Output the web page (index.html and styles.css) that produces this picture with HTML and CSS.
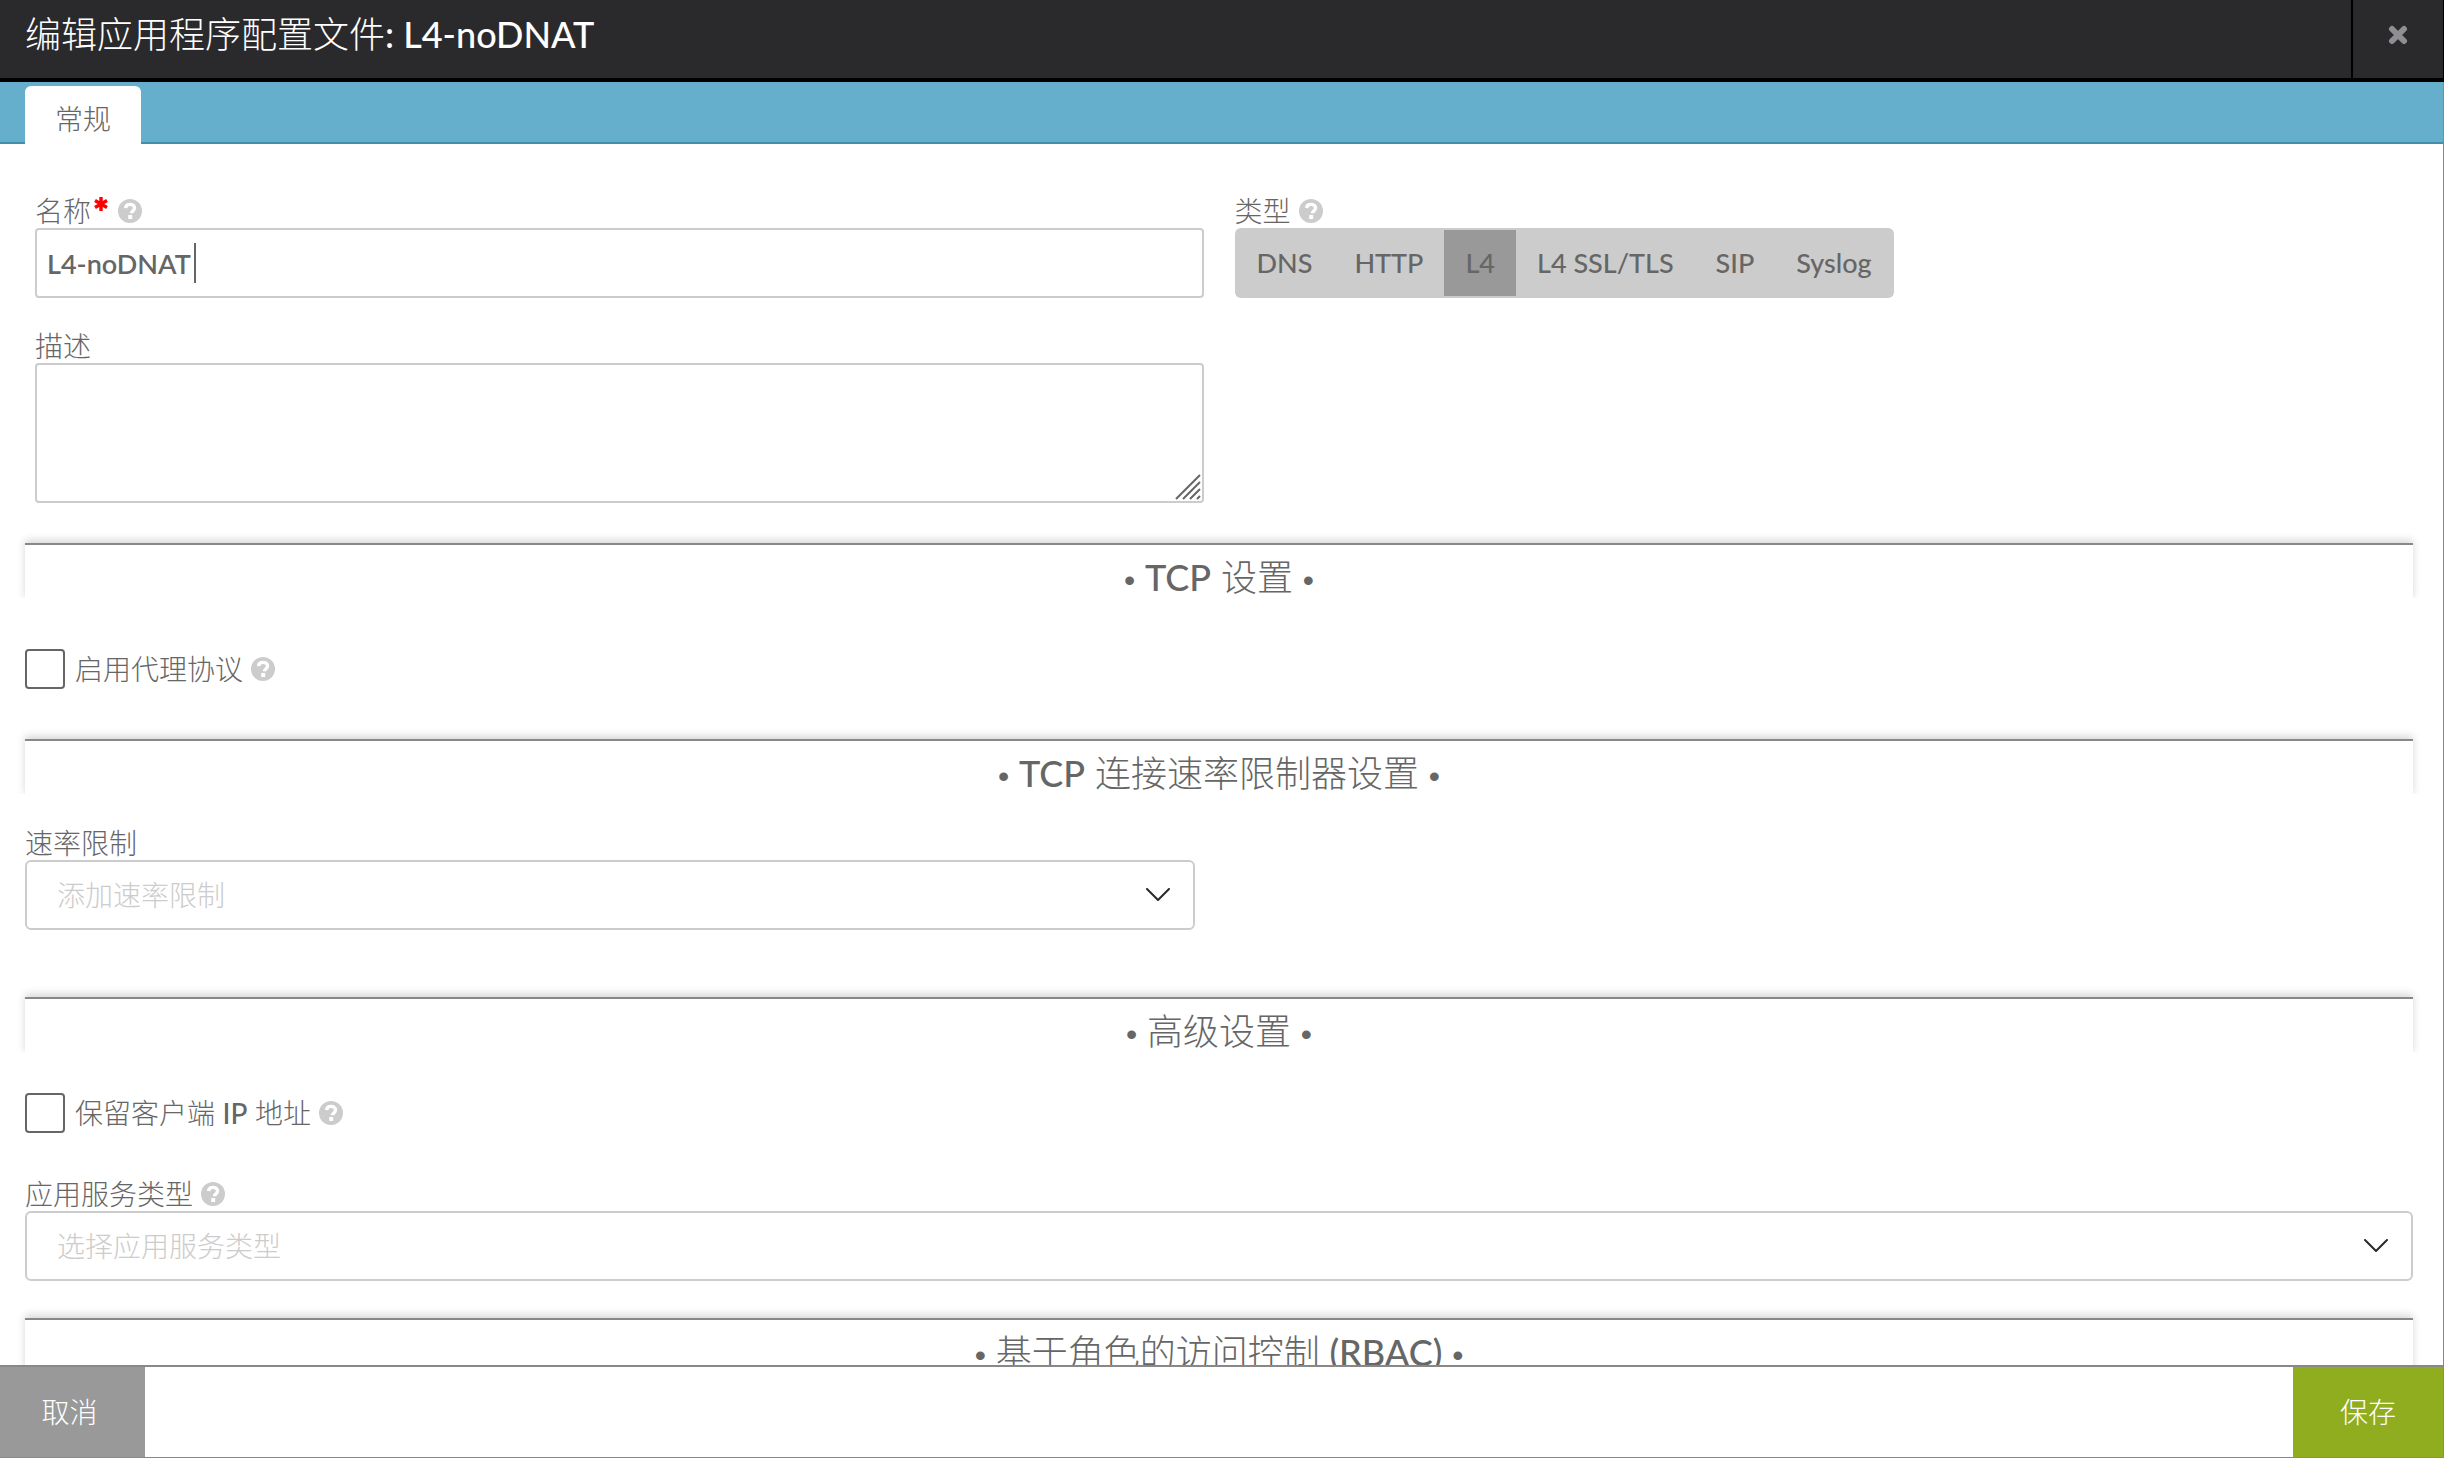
FILE: index.html
```html
<!DOCTYPE html>
<html lang="zh-CN">
<head>
<meta charset="utf-8">
<meta name="viewport" content="width=device-width, initial-scale=1">
<title>编辑应用程序配置文件: L4-noDNAT</title>
<link rel="stylesheet" href="styles.css">
</head>
<body>
<svg class="sprite" aria-hidden="true">
  <symbol id="help" viewBox="0 0 24 24">
    <circle cx="12" cy="12" r="12" fill="#ccc"/>
    <path d="M7.6 9.2C7.8 6.6 9.6 5.4 12 5.4c2.600 0 4.500 1.400 4.500 3.700 0 3-3.100 2.900-3.100 5.100" fill="none" stroke="#fff" stroke-width="3.400"/>
    <rect x="10.200" y="16" width="4" height="4" rx=".5" fill="#fff"/>
  </symbol>
  <symbol id="chevron" viewBox="0 0 24 14">
    <path d="M1 1l11 11L23 1" fill="none" stroke="#2a2a2c" stroke-width="2" stroke-linecap="round" stroke-linejoin="round"/>
  </symbol>
</svg>
<div class="dialog">
  <header class="titlebar">
    <h1 class="title">编辑应用程序配置文件<span class="latin">: L4-noDNAT</span></h1>
    <button class="close" type="button" aria-label="关闭">
      <svg width="20" height="20" viewBox="0 0 20 20"><path d="M4 4l12 12M16 4L4 16" stroke="#8e8e93" stroke-width="6" stroke-linecap="round"/></svg>
    </button>
  </header>
  <nav class="tabs">
    <button class="tab" type="button">常规</button>
  </nav>
  <main class="content">
    <div class="pair">
      <div class="column">
        <div class="field">
          <div class="caption"><label for="name">名称</label><svg class="required" viewBox="0 0 14 16"><path d="M7 1v14M1 4.500l12 7M13 4.500l-12 7" stroke="#f00" stroke-width="3.400"/></svg><svg class="help"><use href="#help"/></svg></div>
          <div class="control">
            <input class="text-input" id="name" type="text" value="L4-noDNAT">
            <span class="caret"></span>
          </div>
        </div>
        <div class="field">
          <div class="caption"><label for="desc">描述</label></div>
          <div class="control">
            <textarea class="text-area" id="desc"></textarea>
            <svg class="grip" viewBox="0 0 26 26"><path d="M1 25L25 1M8 25L25 8M15 25l10-10M22 25l3-3" stroke="#666" stroke-width="2"/></svg>
          </div>
        </div>
      </div>
      <div class="column">
        <div class="field">
          <div class="caption"><span id="type-label">类型</span><svg class="help"><use href="#help"/></svg></div>
          <div class="segments" role="group" aria-labelledby="type-label">
            <button class="segment" type="button">DNS</button>
            <button class="segment" type="button">HTTP</button>
            <button class="segment segment-active" type="button" aria-pressed="true">L4</button>
            <button class="segment" type="button">L4 SSL/TLS</button>
            <button class="segment" type="button">SIP</button>
            <button class="segment" type="button">Syslog</button>
          </div>
        </div>
      </div>
    </div>

    <section class="section section-tcp">
      <h2 class="heading"><span class="dot">•</span> <span class="latin">TCP</span> 设置 <span class="dot">•</span></h2>
      <div class="check">
        <input class="box" id="proxy" type="checkbox">
        <label for="proxy">启用代理协议</label><svg class="help"><use href="#help"/></svg>
      </div>
    </section>

    <section class="section section-rate">
      <h2 class="heading"><span class="dot">•</span> <span class="latin">TCP</span> 连接速率限制器设置 <span class="dot">•</span></h2>
      <div class="field half">
        <div class="caption"><label for="rate">速率限制</label></div>
        <div class="control">
          <select class="select" id="rate"><option>添加速率限制</option></select>
          <svg class="chevron"><use href="#chevron"/></svg>
        </div>
      </div>
    </section>

    <section class="section section-advanced">
      <h2 class="heading"><span class="dot">•</span> 高级设置 <span class="dot">•</span></h2>
      <div class="check">
        <input class="box" id="keep-ip" type="checkbox">
        <label for="keep-ip">保留客户端 <span class="latin">IP</span> 地址</label><svg class="help"><use href="#help"/></svg>
      </div>
      <div class="field">
        <div class="caption"><label for="service">应用服务类型</label><svg class="help"><use href="#help"/></svg></div>
        <div class="control">
          <select class="select" id="service"><option>选择应用服务类型</option></select>
          <svg class="chevron"><use href="#chevron"/></svg>
        </div>
      </div>
    </section>

    <section class="section">
      <h2 class="heading"><span class="dot">•</span> 基于角色的访问控制 <span class="latin">(RBAC)</span> <span class="dot">•</span></h2>
    </section>
  </main>
  <footer class="actions">
    <button class="action cancel" type="button">取消</button>
    <button class="action save" type="button">保存</button>
  </footer>
</div>
</body>
</html>
```

FILE: styles.css
```css
* { box-sizing: border-box; }

body {
  margin: 0;
  color: #666;
  background: #fff;
  font: 300 28px/34px Lato, "Noto Sans CJK SC", sans-serif;
}

button, input, textarea, select { font: inherit; color: inherit; }
button { border: 0; padding: 0; }

.sprite { display: none; }
.latin { font-weight: 500; }
.dot { font-family: "Liberation Sans", sans-serif; font-size: 32px; }

.dialog {
  display: flex;
  flex-direction: column;
  height: 100vh;
}

.titlebar {
  display: flex;
  justify-content: space-between;
  height: 82px;
  color: #fff;
  background: #2a2a2c;
  border-bottom: 4px solid #000;
  border-right: 1px solid #000;
}

.title {
  margin: 0;
  padding: 10px 25px;
  font-size: 36px;
  font-weight: 300;
  line-height: 48px;
}

.close {
  display: flex;
  justify-content: center;
  width: 92px;
  padding-top: 25px;
  background: #2a2a2c;
  border-left: 2px solid #000;
}

.tabs {
  display: flex;
  align-items: flex-end;
  height: 62px;
  padding: 0 25px;
  background: linear-gradient(#66afcc 60px, #3f8eae 60px);
  border-right: 1px solid #888;
}

.tab {
  height: 58px;
  padding: 8px 30px 0;
  background: #fff;
  border-radius: 6px 6px 0 0;
}

.content {
  flex: 1;
  min-height: 0;
  overflow: hidden;
  padding: 50px 30px 0 25px;
  border-right: 1px solid #888;
}

.pair {
  display: grid;
  grid-template-columns: 1fr 1fr;
  gap: 31px;
  padding: 0 10px;
}

.column {
  display: flex;
  flex-direction: column;
  gap: 31px;
}

.caption, .check { display: flex; align-items: center; }
.help { width: 24px; height: 24px; margin-left: 8px; }
.required { width: 14px; height: 16px; margin: 0 2px 14px 3px; }

.text-input, .text-area, .select {
  display: block;
  width: 100%;
  background: #fff;
  border: 2px solid #ccc;
  border-radius: 4px;
  outline: 0;
}

.text-input { height: 70px; padding: 0 10px; font-size: 27px; font-weight: 600; }
.text-area { height: 140px; padding: 10px; resize: none; }

.control { position: relative; }
.caret { position: absolute; left: 159px; top: 15px; width: 2px; height: 40px; background: #666; }
.grip { position: absolute; right: 3px; bottom: 3px; width: 26px; height: 26px; }

.select {
  height: 70px;
  padding: 0 30px;
  color: #ccc;
  border-radius: 6px;
  appearance: none;
}
.chevron { position: absolute; right: 25px; top: 28px; width: 24px; height: 14px; pointer-events: none; }

.segments {
  display: flex;
  width: fit-content;
  height: 70px;
  padding: 2px 1px;
  background: #ccc;
  border-radius: 6px;
}
.segment { padding: 0 21px; font-size: 27px; font-weight: 500; background: #ccc; }
.segment-active { background: #999; }

.section { margin-top: 40px; }
.heading {
  height: 58px;
  margin: 0;
  padding-top: 8px;
  font-size: 36px;
  font-weight: 300;
  line-height: 48px;
  text-align: center;
  border-top: 2px solid #888;
  background: #fff;
  box-shadow: 0 -3px 8px rgba(0, 0, 0, .16);
  clip-path: inset(-12px -12px 3px -12px);
}

.box {
  width: 40px;
  height: 40px;
  margin: 0 10px 0 0;
  background: #fff;
  border: 2px solid #666;
  border-radius: 4px;
  appearance: none;
}

.half { width: 49%; }
.section-tcp .check { margin-top: 48px; }
.section-rate { margin-top: 50px; }
.section-rate .field { margin-top: 29px; }
.section-advanced { margin-top: 67px; }
.section-advanced .check { margin-top: 38px; }
.section-advanced .field { margin-top: 44px; }
.section-advanced + .section { margin-top: 37px; }

.actions {
  display: flex;
  justify-content: space-between;
  height: 93px;
  background: #fff;
  border: solid #888;
  border-width: 2px 1px 1px 0;
}
.action { color: #fff; }
.cancel { width: 145px; padding-right: 6px; background: #999; }
.save { width: 150px; background: #8fad1f; }
```
